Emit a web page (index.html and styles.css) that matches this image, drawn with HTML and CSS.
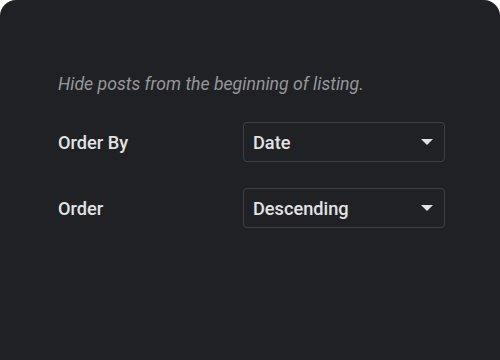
FILE: index.html
```html
<!DOCTYPE html>
<html>
<head>
<meta charset="utf-8">
<link rel="stylesheet" href="styles.css">
</head>
<body>
<div class="panel">
  <p class="hint">Hide posts from the beginning of listing.</p>
  <div class="row">
    <span class="label">Order By</span>
    <div class="select"><span class="value">Date</span><span class="caret"></span></div>
  </div>
  <div class="row">
    <span class="label">Order</span>
    <div class="select"><span class="value">Descending</span><span class="caret"></span></div>
  </div>
</div>
</body>
</html>
```
FILE: styles.css
```css
html, body {
  margin: 0;
  padding: 0;
  background: #ffffff;
}
.panel {
  width: 500px;
  height: 360px;
  box-sizing: border-box;
  background: #202125;
  border-radius: 16px 16px 0 0;
  padding: 73px 55px 0 58px;
  font-family: Roboto, "Liberation Sans", sans-serif;
}
.hint {
  margin: 0 0 27px 0;
  font-size: 17.7px;
  line-height: 22px;
  font-style: italic;
  color: #96979c;
}
.row {
  display: flex;
  align-items: center;
  justify-content: space-between;
  margin-bottom: 26px;
}
.label {
  font-size: 18.2px;
  font-weight: 500;
  color: #e2e3e5;
}
.select {
  width: 202px;
  height: 40px;
  box-sizing: border-box;
  border: 1px solid #3d3f44;
  border-radius: 4px;
  display: flex;
  align-items: center;
  justify-content: space-between;
  padding: 0 11px 0 9px;
}
.value {
  font-size: 18.2px;
  font-weight: 500;
  color: #e2e3e5;
}
.caret {
  width: 0;
  height: 0;
  border-left: 6px solid transparent;
  border-right: 6px solid transparent;
  border-top: 6px solid #e2e3e5;
}
```
